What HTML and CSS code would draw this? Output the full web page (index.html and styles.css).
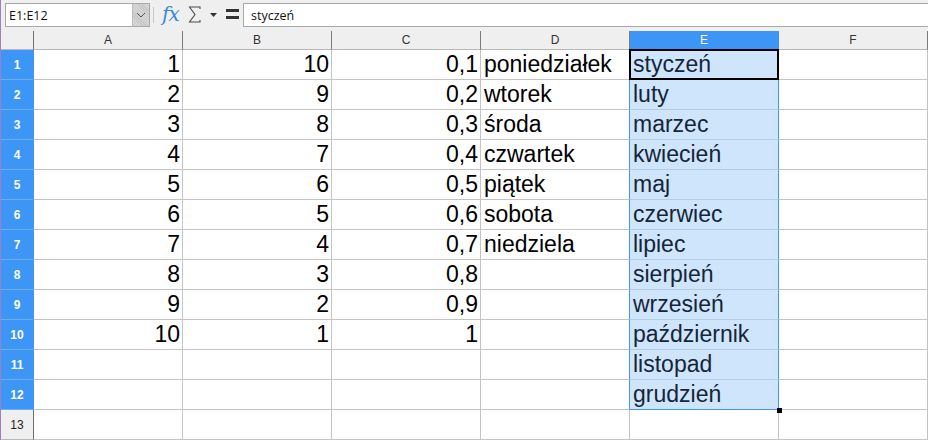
FILE: index.html
```html
<!DOCTYPE html>
<html lang="pl">
<head>
<meta charset="utf-8">
<link rel="stylesheet" href="styles.css">
</head>
<body>
<div class="app">
  <div class="toolbar">
    <div class="namebox">
      <span class="nb-text">E1:E12</span>
      <span class="nb-btn"><svg width="10" height="6" viewBox="0 0 10 6"><path d="M1 1 L5 5 L9 1" fill="none" stroke="#555" stroke-width="1"/></svg></span>
    </div>
    <div class="sep"></div>
    <span class="fx">fx</span>
    <svg class="sigma" width="13" height="17" viewBox="0 0 13 17"><path d="M12 3 V1 H1.5 L7 8.5 L1.5 16 H12 V14" fill="none" stroke="#4a4a4a" stroke-width="1.1" stroke-linejoin="miter"/></svg>
    <svg class="caret" width="7" height="4" viewBox="0 0 7 4"><path d="M0 0 H7 L3.5 4 Z" fill="#333"/></svg>
    <svg class="eq" width="13" height="10" viewBox="0 0 13 10"><rect x="0" y="0" width="13" height="3" fill="#333"/><rect x="0" y="7" width="13" height="3" fill="#333"/></svg>
    <div class="formula"><span>styczeń</span></div>
  </div>
  <div class="sheet">
    <div class="row head">
      <div class="rh corner"></div>
      <div class="ch">A</div><div class="ch">B</div><div class="ch">C</div><div class="ch">D</div><div class="ch sel">E</div><div class="ch">F</div>
    </div>
    <div class="row"><div class="rh sel">1</div><div class="c n">1</div><div class="c n">10</div><div class="c n">0,1</div><div class="c t d">poniedziałek</div><div class="c t e active">styczeń</div><div class="c"></div></div>
    <div class="row"><div class="rh sel">2</div><div class="c n">2</div><div class="c n">9</div><div class="c n">0,2</div><div class="c t d">wtorek</div><div class="c t e">luty</div><div class="c"></div></div>
    <div class="row"><div class="rh sel">3</div><div class="c n">3</div><div class="c n">8</div><div class="c n">0,3</div><div class="c t d">środa</div><div class="c t e">marzec</div><div class="c"></div></div>
    <div class="row"><div class="rh sel">4</div><div class="c n">4</div><div class="c n">7</div><div class="c n">0,4</div><div class="c t d">czwartek</div><div class="c t e">kwiecień</div><div class="c"></div></div>
    <div class="row"><div class="rh sel">5</div><div class="c n">5</div><div class="c n">6</div><div class="c n">0,5</div><div class="c t d">piątek</div><div class="c t e">maj</div><div class="c"></div></div>
    <div class="row"><div class="rh sel">6</div><div class="c n">6</div><div class="c n">5</div><div class="c n">0,6</div><div class="c t d">sobota</div><div class="c t e">czerwiec</div><div class="c"></div></div>
    <div class="row"><div class="rh sel">7</div><div class="c n">7</div><div class="c n">4</div><div class="c n">0,7</div><div class="c t d">niedziela</div><div class="c t e">lipiec</div><div class="c"></div></div>
    <div class="row"><div class="rh sel">8</div><div class="c n">8</div><div class="c n">3</div><div class="c n">0,8</div><div class="c t d"></div><div class="c t e">sierpień</div><div class="c"></div></div>
    <div class="row"><div class="rh sel">9</div><div class="c n">9</div><div class="c n">2</div><div class="c n">0,9</div><div class="c t d"></div><div class="c t e">wrzesień</div><div class="c"></div></div>
    <div class="row"><div class="rh sel">10</div><div class="c n">10</div><div class="c n">1</div><div class="c n">1</div><div class="c t d"></div><div class="c t e">październik</div><div class="c"></div></div>
    <div class="row"><div class="rh sel">11</div><div class="c n"></div><div class="c n"></div><div class="c n"></div><div class="c t d"></div><div class="c t e">listopad</div><div class="c"></div></div>
    <div class="row"><div class="rh sel">12</div><div class="c n"></div><div class="c n"></div><div class="c n"></div><div class="c t d"></div><div class="c t e last">grudzień<span class="handle"></span></div><div class="c"></div></div>
    <div class="row"><div class="rh">13</div><div class="c"></div><div class="c"></div><div class="c"></div><div class="c"></div><div class="c"></div><div class="c"></div></div>
  </div>
</div>
</body>
</html>
```
FILE: styles.css
```css
html, body {
  margin: 0;
  padding: 0;
  background: #efefef;
  overflow: hidden;
}
.app {
  width: 927px;
  height: 440px;
  border-left: 1px solid #9b7fc7;
  background: #efefef;
  font-family: "Liberation Sans", Arial, sans-serif;
}
.toolbar {
  height: 31px;
  display: flex;
  align-items: center;
  position: relative;
}
.namebox {
  margin-left: 4px;
  margin-top: -1px;
  width: 143px;
  height: 22px;
  border: 1px solid #a9a9a9;
  background: #fff;
  display: flex;
  align-items: center;
}
.nb-text {
  flex: 1;
  padding-left: 3px;
  font-family: "Open Sans", "Liberation Sans", sans-serif;
  font-size: 12.5px;
  color: #111;
}
.nb-btn {
  width: 16px;
  height: 22px;
  background: repeating-linear-gradient(45deg, #d8d8d8 0 1px, #c6c6c6 1px 2px);
  border-left: 1px solid #bdbdbd;
  display: flex;
  align-items: center;
  justify-content: center;
}
.sep {
  width: 1px;
  height: 16px;
  background: #c8c8c8;
  margin: -2px 8px 0 3px;
}
.fx {
  font-family: "DejaVu Serif", "Liberation Serif", serif;
  font-style: italic;
  font-size: 20px;
  color: #3b8ad6;
  margin-top: -4px;
  letter-spacing: -1px;
  width: 20px;
}
.sigma {
  margin: -2px 0 0 6px;
}
.caret {
  margin: -2px 0 0 9px;
}
.eq {
  margin: -3px 0 0 9px;
}
.formula {
  position: absolute;
  left: 242px;
  top: 3px;
  width: 700px;
  height: 22px;
  border: 1px solid #a9a9a9;
  background: #fff;
  display: flex;
  align-items: center;
}
.formula span {
  padding-left: 7px;
  font-family: "Open Sans", "Liberation Sans", sans-serif;
  font-size: 12.5px;
  color: #111;
}
.sheet {
  display: flex;
  flex-direction: column;
}
.row {
  display: flex;
  height: 30px;
}
.row.head {
  height: 19px;
}
.rh {
  width: 32px;
  border-right: 1px solid #6f6f6f;
  border-bottom: 1px solid #b8b8b8;
  background: #efefef;
  font-size: 12px;
  color: #222;
  display: flex;
  align-items: center;
  justify-content: center;
  flex: none;
}
.rh.sel {
  background: #3d95f5;
  color: #fff;
  font-weight: bold;
  border-right-color: #3d95f5;
  border-bottom-color: #6aaef8;
}
.rh.corner {
  border-right-color: #6f6f6f;
  border-bottom-color: #b8b8b8;
}
.ch {
  width: 148px;
  border-right: 1px solid #7a7a7a;
  border-bottom: 1px solid #b8b8b8;
  font-size: 12px;
  color: #333;
  display: flex;
  align-items: center;
  justify-content: center;
  flex: none;
}
.ch.sel {
  background: #3d95f5;
  color: #fff;
  border-right-color: #3d95f5;
  border-bottom-color: #3d95f5;
}
.c {
  width: 148px;
  height: 29px;
  border-right: 1px solid #c4c4c4;
  border-bottom: 1px solid #c4c4c4;
  background: #fff;
  font-size: 23px;
  line-height: 29px;
  color: #000;
  white-space: nowrap;
  flex: none;
  position: relative;
}
.c.n {
  text-align: right;
  padding-right: 2px;
  width: 146px;
}
.c.t {
  padding-left: 3px;
  width: 145px;
}
.c.d {
  border-right-color: #3d95f5;
}
.c.e {
  background: #cfe5fc;
  color: #152539;
  border-right-color: #3d95f5;
  border-bottom-color: #b4cce4;
}
.c.e.last {
  border-bottom-color: #3d95f5;
}
.c.active::after {
  content: "";
  position: absolute;
  left: -1px;
  top: -1px;
  right: -1px;
  bottom: -1px;
  border: 2px solid #000;
}
.handle {
  position: absolute;
  right: -4px;
  bottom: -4px;
  width: 5px;
  height: 5px;
  background: #000;
  z-index: 2;
}
```
